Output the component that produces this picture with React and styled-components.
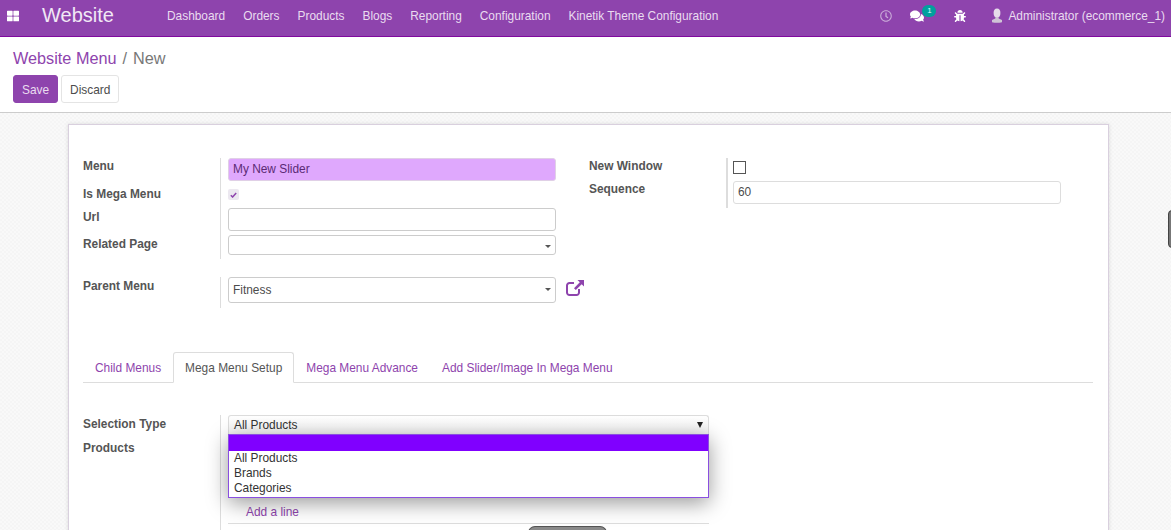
import React from 'react';
import styled, { createGlobalStyle } from 'styled-components';
import { FaThLarge, FaRegClock, FaComments, FaBug } from 'react-icons/fa';

const GlobalStyle = createGlobalStyle`
  html, body {
    margin: 0;
    padding: 0;
    height: 100%;
    overflow: hidden;
    background: #fff;
  }
  body {
    font-family: "Liberation Sans", Arial, sans-serif;
    font-size: 11.9px;
    color: #4c4c4c;
  }
`

const Page = styled.div`
  width: 1171px;
  height: 530px;
  display: flex;
  flex-direction: column;
  overflow: hidden;
  position: relative;
`

const NavBar = styled.header`
  flex: 0 0 37px;
  box-sizing: border-box;
  display: flex;
  align-items: center;
  background: #8e44ad;
  border-bottom: 1px solid #800a9e;
  color: #eadcf0;
  padding-bottom: 5px;
`

const AppsToggle = styled.span`
  width: 42px;
  padding-left: 7px;
  box-sizing: border-box;
  display: flex;
  font-size: 12px;
  color: #fff;
`

const Brand = styled.span`
  width: 125px;
  font-size: 20px;
  color: #f1e8f5;
`

const NavLink = styled.a`
  margin-right: 18px;
`

const NavRight = styled.div`
  margin-left: auto;
  display: flex;
  align-items: center;
  padding-right: 6px;
`

const NavIcon = styled.span`
  position: relative;
  display: flex;
  width: ${(props) => props.width}px;
  font-size: ${(props) => props.size || 13}px;
  color: ${(props) => props.color || '#fff'};
`

const Badge = styled.span`
  position: absolute;
  left: 12px;
  top: -4px;
  width: 14px;
  height: 12px;
  border-radius: 6px;
  background: #00a09d;
  color: #dff;
  font-size: 8px;
  line-height: 12px;
  text-align: center;
`

const ControlPanel = styled.div`
  flex: 0 0 76px;
  box-sizing: border-box;
  padding: 12px 13px 0;
  background: #fff;
  border-bottom: 1px solid #ccc;
`

const Breadcrumb = styled.div`
  font-size: 16.25px;
  line-height: 19px;
  color: #777;
`

const CrumbLink = styled.a`
  color: #8e44ad;
`

const CrumbSeparator = styled.span`
  margin: 0 6px;
`

const Buttons = styled.div`
  display: flex;
  gap: 3px;
  margin-top: 7px;
`

const Button = styled.button`
  box-sizing: border-box;
  height: 28px;
  padding: 1px 8px 0;
  border-radius: 3px;
  font: 11.9px "Liberation Sans", Arial, sans-serif;
  border: 1px solid ${(props) => (props.$primary ? '#8e44ad' : '#e4e4e4')};
  background: ${(props) => (props.$primary ? '#8e44ad' : '#fff')};
  color: ${(props) => (props.$primary ? '#eadcf0' : '#4c4c4c')};
`

const Content = styled.main`
  flex: 1;
  min-height: 0;
  padding: 11px 62px 0 68px;
  background-color: #f9f9f9;
  background-image:
    linear-gradient(45deg, #f5f5f5 25%, transparent 25%, transparent 75%, #f5f5f5 75%),
    linear-gradient(45deg, #f5f5f5 25%, transparent 25%, transparent 75%, #f5f5f5 75%);
  background-size: 4px 4px;
  background-position: 0 0, 2px 2px;
`

const Sheet = styled.div`
  box-sizing: border-box;
  height: 500px;
  padding: 33px 15px 0 14px;
  background: #fff;
  border: 1px solid #d9d0de;
  border-bottom: 0;
  box-shadow: 0 0 4px rgba(0, 0, 0, 0.12);
`

const TopGroups = styled.div`
  display: flex;
`

const Group = styled.div`
  width: ${(props) => props.width}px;
`

const FieldRow = styled.div`
  display: flex;
  height: ${(props) => props.height}px;
  margin-top: ${(props) => props.gap || 0}px;
`

const Label = styled.label`
  flex: 0 0 137px;
  box-sizing: border-box;
  padding-top: ${(props) => props.top || 0}px;
  font-weight: 700;
  line-height: 14px;
  color: #555;
`

const FieldCell = styled.div`
  flex: 1;
  display: flex;
  align-items: flex-start;
  gap: 10px;
  padding-left: ${(props) => (props.$thick ? 5 : 7)}px;
  border-left: ${(props) => (props.$thick ? 2 : 1)}px solid #ddd;
`

const TextField = styled.div`
  box-sizing: border-box;
  width: 328px;
  height: ${(props) => props.height || 23}px;
  padding: ${(props) => props.$textTop || 0}px 4px 1px;
  display: flex;
  align-items: center;
  position: relative;
  border-radius: 3px;
  border: 1px solid ${(props) => (props.$required ? '#e0d0e6' : props.$light ? '#ddd' : '#ccc')};
  background: ${(props) => (props.$required ? '#dfa8fd' : '#fff')};
  color: ${(props) => (props.$required ? '#5b2a75' : '#4c4c4c')};
`

const Caret = styled.span`
  position: absolute;
  right: 4px;
  bottom: ${(props) => props.bottom}px;
  border-left: 3.5px solid transparent;
  border-right: 3.5px solid transparent;
  border-top: 3.5px solid #555;
`

const CheckedBox = styled.span`
  width: 11px;
  height: 11px;
  margin-top: 3px;
  border-radius: 2px;
  background: #ece8f0;
  display: flex;
  align-items: center;
  justify-content: center;
`

const EmptyBox = styled.span`
  box-sizing: border-box;
  width: 13px;
  height: 13px;
  margin-top: 3px;
  border: 1px solid #555;
  background: #fff;
`

const LinkIcon = styled.svg`
  margin-top: 3px;
`

const TabBar = styled.div`
  display: flex;
  height: 31px;
  box-sizing: border-box;
  margin-top: 44px;
  border-bottom: 1px solid #ddd;
`

const Tab = styled.a`
  box-sizing: border-box;
  height: 31px;
  padding: 8px 11px 0;
  font-size: 11.9px;
  line-height: 15px;
  border: 1px solid ${(props) => (props.$active ? '#ddd' : 'transparent')};
  border-bottom-color: ${(props) => (props.$active ? '#fff' : 'transparent')};
  border-radius: 3px 3px 0 0;
  background: ${(props) => (props.$active ? '#fff' : 'transparent')};
  color: ${(props) => (props.$active ? '#555' : '#8e44ad')};
`

const TabBody = styled.div`
  margin-top: 32px;
  position: relative;
`

const NativeSelect = styled.div`
  box-sizing: border-box;
  width: 481px;
  height: 20px;
  padding: 0 5px;
  display: flex;
  align-items: center;
  justify-content: space-between;
  color: #333;
  border: 1px solid #ddd;
  border-bottom-color: #bbb;
  border-radius: 3px 3px 0 0;
  background: linear-gradient(#fff, #f2f2f2);
`

const SelectArrow = styled.span`
  border-left: 3.5px solid transparent;
  border-right: 3.5px solid transparent;
  border-top: 6px solid #222;
`

const DropList = styled.ul`
  position: absolute;
  left: 145px;
  top: 19px;
  box-sizing: border-box;
  width: 481px;
  height: 64px;
  margin: 0;
  padding: 0;
  list-style: none;
  background: #fff;
  border: 1px solid #8a4fe0;
  box-shadow: 0 5px 20px rgba(0, 0, 0, 0.4);
  z-index: 2;
`

const DropOption = styled.li`
  height: ${(props) => (props.$selected ? 16 : 15)}px;
  padding-left: 5px;
  line-height: 15px;
  color: #333;
  background: ${(props) => (props.$selected ? '#8000ff' : 'transparent')};
`

const LineTable = styled.div`
  width: 481px;
  padding-top: 59px;
`

const AddLine = styled.a`
  display: block;
  height: 26px;
  box-sizing: border-box;
  padding: 7px 0 0 18px;
  line-height: 14px;
  color: #8e44ad;
  border-bottom: 1px solid #ddd;
`

const Pager = styled.div`
  width: 79px;
  height: 12px;
  margin: 2px 0 0 300px;
  border-radius: 7px 7px 0 0;
  background: #8a8a8a;
  border: 1px solid #555;
  border-bottom: 0;
  box-sizing: border-box;
`

const SideHandle = styled.div`
  position: absolute;
  left: 1168px;
  top: 210px;
  width: 8px;
  height: 38px;
  box-sizing: border-box;
  border: 1px solid #444;
  border-radius: 4px;
  background: #777;
`

const Avatar = () => (
  <svg width="12" height="15" viewBox="0 0 12 15">
    <ellipse cx="6" cy="5" rx="3.4" ry="4.6" fill="#e6dcea" />
    <path d="M4.6 9h2.8l.3 1.6L11 12v2.2c-2.8.8-7.2.8-10 0V12l3.3-1.4z" fill="#cfc3d6" />
  </svg>
);

const Check = () => (
  <svg width="7" height="6" viewBox="0 0 7 6">
    <path d="M.8 3.2 2.6 5 6.2 1" fill="none" stroke="#8e44ad" strokeWidth="1.5" />
  </svg>
);

const ExternalLink = () => (
  <LinkIcon width="18" height="16" viewBox="0 0 18 16">
    <path d="M8 3H3.5A2.5 2.5 0 0 0 1 5.5v7A2.5 2.5 0 0 0 3.5 15h7a2.5 2.5 0 0 0 2.500-2.500V9" fill="none" stroke="#8e44ad" strokeWidth="2" />
    <path d="M11.5 0H18v6.5l-2.3-2.3L9.8 10 8 8.2l5.8-5.900z" fill="#8e44ad" />
  </LinkIcon>
);

const NAV_ITEMS = ['Dashboard', 'Orders', 'Products', 'Blogs', 'Reporting', 'Configuration', 'Kinetik Theme Configuration'];
const TABS = ['Child Menus', 'Mega Menu Setup', 'Mega Menu Advance', 'Add Slider/Image In Mega Menu'];

export default function App() {
  return (
    <Page>
      <GlobalStyle />
      <NavBar>
        <AppsToggle><FaThLarge /></AppsToggle>
        <Brand>Website</Brand>
        {NAV_ITEMS.map((item) => <NavLink key={item}>{item}</NavLink>)}
        <NavRight>
          <NavIcon width={30} size={12} color="#c9a9d8"><FaRegClock /></NavIcon>
          <NavIcon width={44} size={14}>
            <FaComments />
            <Badge>1</Badge>
          </NavIcon>
          <NavIcon width={37} size={12}><FaBug /></NavIcon>
          <NavIcon width={17}><Avatar /></NavIcon>
          <span>Administrator (ecommerce_1)</span>
        </NavRight>
      </NavBar>
      <ControlPanel>
        <Breadcrumb><CrumbLink>Website Menu</CrumbLink><CrumbSeparator>/</CrumbSeparator>New</Breadcrumb>
        <Buttons>
          <Button $primary>Save</Button>
          <Button>Discard</Button>
        </Buttons>
      </ControlPanel>
      <Content>
        <Sheet>
          <TopGroups>
            <Group width={506}>
              <FieldRow height={28}>
                <Label top={1}>Menu</Label>
                <FieldCell><TextField $required>My New Slider</TextField></FieldCell>
              </FieldRow>
              <FieldRow height={22}>
                <Label top={1}>Is Mega Menu</Label>
                <FieldCell><CheckedBox><Check /></CheckedBox></FieldCell>
              </FieldRow>
              <FieldRow height={27}>
                <Label top={2}>Url</Label>
                <FieldCell><TextField /></FieldCell>
              </FieldRow>
              <FieldRow height={24}>
                <Label top={2}>Related Page</Label>
                <FieldCell><TextField height={20}><Caret bottom={6} /></TextField></FieldCell>
              </FieldRow>
              <FieldRow height={31} gap={18}>
                <Label top={2}>Parent Menu</Label>
                <FieldCell>
                  <TextField height={26} $textTop={1}>Fitness<Caret bottom={11} /></TextField>
                  <ExternalLink />
                </FieldCell>
              </FieldRow>
            </Group>
            <Group width={500}>
              <FieldRow height={23}>
                <Label top={1}>New Window</Label>
                <FieldCell $thick><EmptyBox /></FieldCell>
              </FieldRow>
              <FieldRow height={27}>
                <Label top={1}>Sequence</Label>
                <FieldCell $thick><TextField $light>60</TextField></FieldCell>
              </FieldRow>
            </Group>
          </TopGroups>
          <TabBar>
            {TABS.map((tab, i) => <Tab key={tab} $active={i === 1}>{tab}</Tab>)}
          </TabBar>
          <TabBody>
            <FieldRow height={24}>
              <Label top={2}>Selection Type</Label>
              <FieldCell><NativeSelect>All Products<SelectArrow /></NativeSelect></FieldCell>
            </FieldRow>
            <FieldRow height={100}>
              <Label top={2}>Products</Label>
              <FieldCell>
                <LineTable>
                  <AddLine>Add a line</AddLine>
                  <Pager />
                </LineTable>
              </FieldCell>
            </FieldRow>
            <DropList>
              <DropOption $selected />
              <DropOption>All Products</DropOption>
              <DropOption>Brands</DropOption>
              <DropOption>Categories</DropOption>
            </DropList>
          </TabBody>
        </Sheet>
      </Content>
      <SideHandle />
    </Page>
  );
}
